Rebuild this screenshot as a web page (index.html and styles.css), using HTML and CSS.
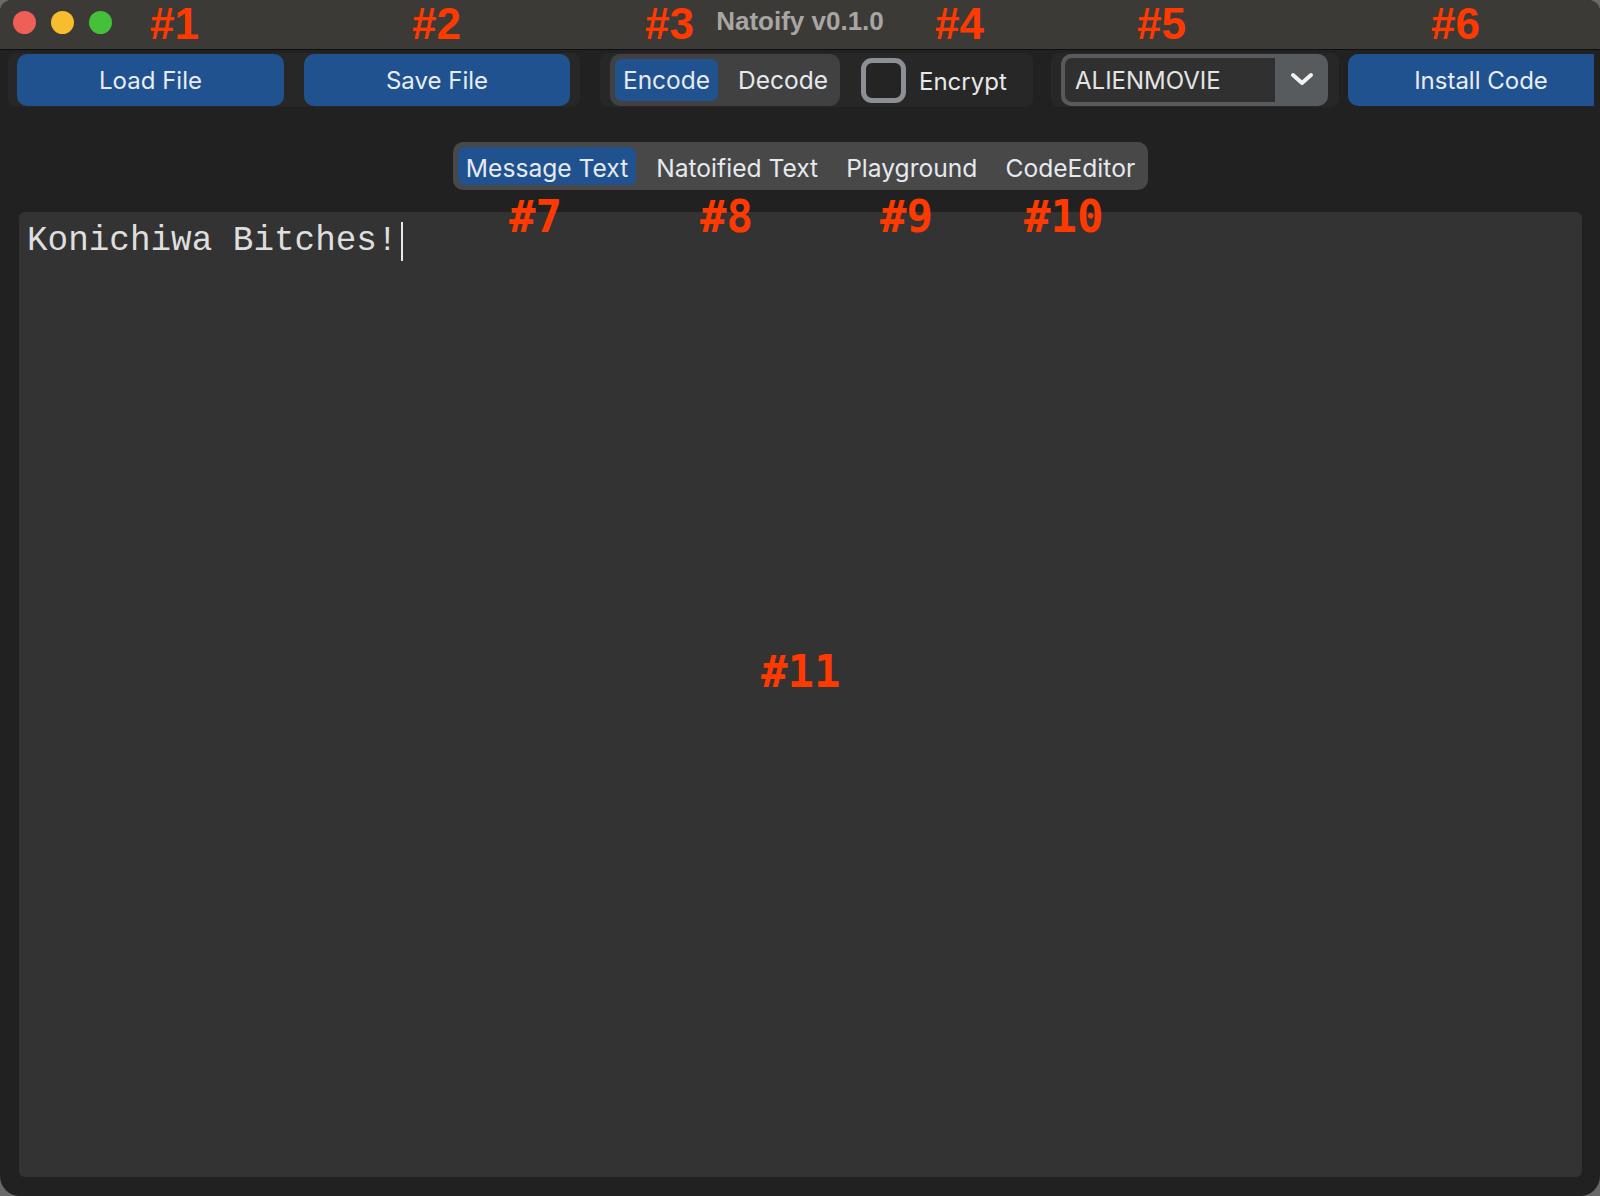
FILE: index.html
```html
<!DOCTYPE html>
<html>
<head>
<meta charset="utf-8">
<title>Natoify v0.1.0</title>
<link rel="stylesheet" href="styles.css">
</head>
<body>
<div class="window">
  <header class="titlebar">
    <div class="lights">
      <span class="light red"></span>
      <span class="light yellow"></span>
      <span class="light green"></span>
    </div>
    <div class="title">Natoify v0.1.0</div>
    <div class="spacer"></div>
  </header>

  <div class="toolbar">
    <div class="group g-files">
      <button class="btn btn-load">Load File</button>
      <button class="btn btn-save">Save File</button>
    </div>
    <div class="group g-mode">
      <div class="segmented">
        <span class="seg seg-on">Encode</span>
        <span class="seg">Decode</span>
      </div>
      <span class="checkbox"></span>
      <span class="check-label">Encrypt</span>
    </div>
    <div class="group g-combo">
      <div class="combo">
        <span class="combo-field">ALIENMOVIE</span>
        <span class="combo-arrow">
          <svg width="24" height="16" viewBox="0 0 24 16"><polyline points="3,3 12,11 21,3" fill="none" stroke="#f2f2f2" stroke-width="4" stroke-linecap="round" stroke-linejoin="round"/></svg>
        </span>
      </div>
    </div>
    <div class="group g-install">
      <button class="btn btn-install">Install Code</button>
    </div>
  </div>

  <main class="main">
    <nav class="tabs">
      <span class="tab tab-on">Message Text</span>
      <span class="tab">Natoified Text</span>
      <span class="tab">Playground</span>
      <span class="tab">CodeEditor</span>
    </nav>
    <div class="editor">
      <div class="editor-line">Konichiwa Bitches!<span class="caret"></span></div>
    </div>
  </main>

  <span class="label sans l1">#1</span>
  <span class="label sans l2">#2</span>
  <span class="label sans l3">#3</span>
  <span class="label sans l4">#4</span>
  <span class="label sans l5">#5</span>
  <span class="label sans l6">#6</span>
  <span class="label mono l7">#7</span>
  <span class="label mono l8">#8</span>
  <span class="label mono l9">#9</span>
  <span class="label mono l10">#10</span>
  <span class="label mono l11">#11</span>
</div>
</body>
</html>
```

FILE: styles.css
```css
* { box-sizing: border-box; }
html, body {
  margin: 0;
  padding: 0;
  background: #6a6a6a;
}
body {
  font-family: Inter, "Noto Sans", "Liberation Sans", sans-serif;
}
.window {
  position: relative;
  width: 1600px;
  height: 1196px;
  background: #212121;
  border-radius: 12px 12px 20px 20px;
  overflow: hidden;
  display: flex;
  flex-direction: column;
}

/* title bar */
.titlebar {
  height: 50px;
  flex: 0 0 50px;
  background: #3c3a37;
  border-bottom: 1px solid #0f0f0f;
  display: grid;
  grid-template-columns: 1fr auto 1fr;
  align-items: center;
}
.lights {
  display: flex;
  gap: 15px;
  padding-left: 13px;
  padding-bottom: 4px;
}
.light {
  width: 23px;
  height: 23px;
  border-radius: 50%;
}
.red { background: #ef5f58; }
.yellow { background: #f7bd2f; }
.green { background: #45c03b; }
.title {
  font-family: "Liberation Sans", Arial, sans-serif;
  font-weight: bold;
  font-size: 26px;
  color: #a8a6a3;
  padding-bottom: 6px;
}

/* toolbar */
.toolbar {
  display: flex;
  align-items: stretch;
  padding: 3px 0 0 8px;
  height: 57px;
}
.group {
  display: flex;
  align-items: center;
  flex-shrink: 0;
  background: #272727;
  border-radius: 8px;
}
.g-files {
  width: 572px;
  padding: 0 9px;
  gap: 20px;
}
.g-mode {
  margin-left: 20px;
  width: 433px;
  padding-left: 10px;
}
.g-combo {
  margin-left: 18px;
  width: 288px;
  padding-left: 10px;
}
.g-install {
  background: transparent;
  padding-left: 9px;
  width: 255px;
  overflow: hidden;
  border-radius: 0;
}
.btn {
  font-family: Inter, "Noto Sans", sans-serif;
  font-size: 24px;
  color: #e8edf4;
  background: #1f528f;
  border: none;
  border-radius: 10px;
  height: 52px;
  width: 267px;
  padding: 0;
  flex-shrink: 0;
}
.btn-save { width: 266px; }
.btn-install { width: 266px; }

.segmented {
  display: flex;
  align-items: center;
  width: 230px;
  height: 52px;
  background: #414141;
  border-radius: 10px;
  padding: 0 5px;
  gap: 12px;
}
.seg {
  font-size: 24.5px;
  color: #e6e9ee;
  height: 42px;
  display: flex;
  align-items: center;
  padding: 0 8px;
  border-radius: 7px;
}
.seg-on {
  background: #1f528f;
  width: 103px;
  justify-content: center;
}
.checkbox {
  width: 45px;
  height: 45px;
  margin-left: 21px;
  border: 5px solid #8c9095;
  border-radius: 11px;
  background: #242424;
}
.check-label {
  font-size: 24px;
  color: #e8e8e8;
  margin-left: 13px;
  padding-top: 2px;
}

.combo {
  display: flex;
  width: 267px;
  height: 52px;
  background: #585b5e;
  border-radius: 10px;
  padding: 4px 0 4px 4px;
}
.combo-field {
  width: 210px;
  background: #303030;
  border-radius: 7px 0 0 7px;
  font-size: 24px;
  color: #e4e4e4;
  display: flex;
  align-items: center;
  padding-left: 10px;
}
.combo-arrow {
  flex: 1;
  display: flex;
  align-items: center;
  justify-content: center;
}

/* main */
.main {
  flex: 1;
  display: flex;
  flex-direction: column;
  align-items: center;
  padding: 35px 18px 19px 19px;
}
.tabs {
  display: flex;
  gap: 12px;
  background: #484848;
  border-radius: 10px;
  padding: 5px 5px;
  height: 48px;
}
.tab {
  font-size: 24.6px;
  color: #e6e9ee;
  padding: 4px 8px 0;
  display: flex;
  align-items: center;
  border-radius: 7px;
}
.tab-on {
  background: #1f528f;
}
.editor {
  align-self: stretch;
  flex: 1;
  margin-top: 22px;
  background: #333333;
  border-radius: 6px;
  padding: 9px 8px;
}
.editor-line {
  font-family: "Liberation Mono", "Courier New", monospace;
  font-size: 34.3px;
  line-height: 40px;
  color: #dedede;
  display: flex;
  align-items: center;
}
.caret {
  display: inline-block;
  width: 2px;
  height: 39px;
  background: #e8e8e8;
  margin-left: 4px;
}

/* annotation labels */
.label {
  position: absolute;
  color: #ff3a00;
  font-weight: bold;
  font-size: 44px;
  line-height: 44px;
}
.sans { font-family: "Liberation Sans", Arial, sans-serif; top: 2px; }
.mono { font-family: "DejaVu Sans Mono", monospace; top: 195px; }
.l1 { left: 150px; }
.l2 { left: 412px; }
.l3 { left: 645px; }
.l4 { left: 935px; }
.l5 { left: 1137px; }
.l6 { left: 1431px; }
.l7 { left: 509px; }
.l8 { left: 700px; }
.l9 { left: 880px; }
.l10 { left: 1024px; }
.l11 { left: 761px; top: 650px; }
```
